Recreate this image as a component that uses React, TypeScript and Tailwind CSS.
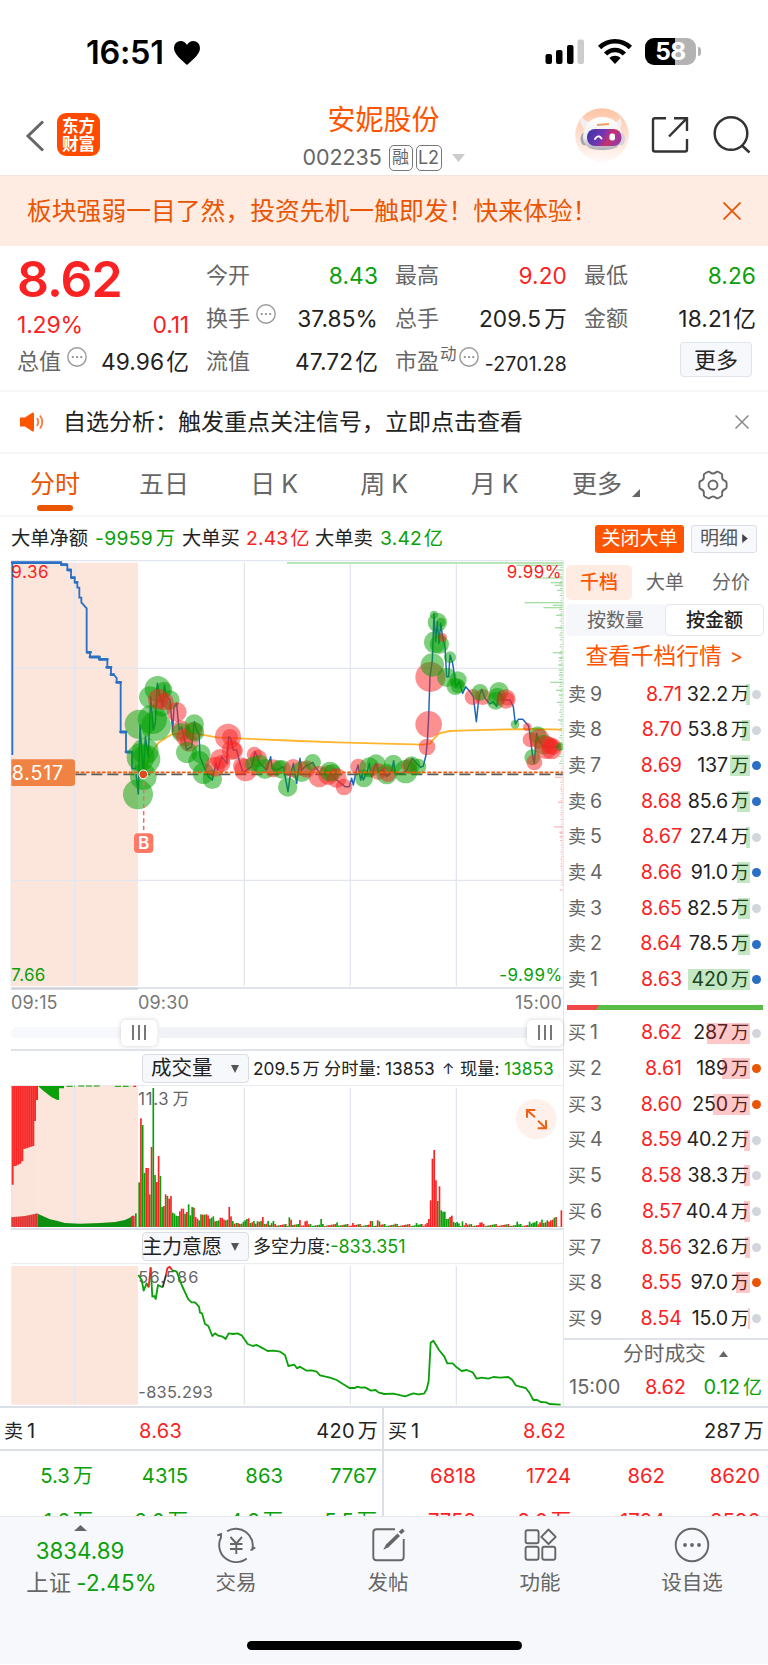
import React from "react";

const RED = "#fa2222";
const GREEN = "#0aa00a";

type Circle = [number, number, number, "g" | "r"];

const preOpen =
  "37,615 37,38 183,38 183,44 202,44 202,60 213,60 213,83 224,83 224,97 232,97 232,113 238,113 238,143 244,143 244,157 260,175 260,307 270,307 270,321 298,321 298,328 322,328 322,352 333,352 333,374 341,374 350,384 350,397 362,397 362,546 378,546 378,606 396,606 396,656 408,656";

const priceLine =
  "408,672 415,732 420,525 425,600 430,680 436,560 445,620 452,440 460,540 466,520 472,400 480,440 487,470 493,405 500,440 510,450 518,545 522,470 530,460 537,540 545,530 560,600 575,590 583,515 590,540 597,550 600,620 612,650 625,680 637,690 648,640 653,660 665,620 680,640 686,560 692,565 700,600 710,600 720,640 730,670 740,660 755,650 765,605 780,640 800,660 812,620 816,655 830,660 850,650 864,725 870,680 880,640 890,700 900,625 905,660 915,650 938,637 945,650 960,670 985,665 1010,690 1035,710 1048,710 1055,685 1060,705 1068,665 1074,645 1082,690 1086,672 1090,690 1100,670 1108,640 1114,680 1128,640 1135,665 1150,660 1160,680 1175,665 1181,632 1186,670 1210,670 1220,660 1237,625 1250,640 1262,652 1270,648 1278,615 1282,575 1286,500 1290,380 1297,330 1302,190 1307,275 1312,215 1317,280 1322,220 1328,262 1335,290 1340,380 1346,380 1350,315 1358,340 1368,410 1378,395 1388,430 1397,410 1410,425 1420,440 1429,515 1437,440 1445,418 1455,445 1470,462 1480,455 1490,470 1498,425 1510,450 1530,450 1540,470 1546,522 1555,508 1568,508 1575,515 1586,528 1592,570 1598,620 1603,640 1610,550 1617,570 1630,590 1650,590 1678,590";

const averageLine =
  "432,672 448,620 475,578 515,553 560,548 605,554 650,562 733,566 900,573 1010,577 1152,581 1270,584 1290,581 1302,566 1318,550 1350,543 1400,541 1520,538 1600,537 1685,539";

const circles: Circle[] = [
  [414, 733, 45, "g"], [418, 523, 44, "g"], [457, 508, 44, "g"], [468, 528, 45, "g"], [422, 622, 42, "g"],
  [436, 603, 40, "g"], [438, 628, 43, "g"], [430, 680, 40, "g"], [450, 442, 33, "g"], [473, 417, 39, "g"],
  [492, 420, 25, "g"], [510, 450, 29, "g"], [486, 472, 28, "g"], [475, 447, 31, "r"], [495, 455, 26, "r"],
  [530, 486, 30, "r"], [543, 540, 29, "r"], [543, 547, 28, "g"], [555, 562, 27, "r"], [567, 577, 28, "r"],
  [580, 543, 28, "r"], [583, 522, 29, "g"], [584, 546, 29, "g"], [560, 607, 32, "g"], [603, 612, 29, "g"],
  [597, 635, 32, "g"], [610, 670, 32, "g"], [637, 688, 29, "g"], [645, 650, 30, "r"], [660, 627, 30, "r"],
  [684, 560, 39, "r"], [690, 561, 24, "r"], [695, 600, 30, "r"], [703, 602, 26, "r"], [665, 640, 26, "r"],
  [725, 648, 26, "r"], [737, 660, 34, "r"], [763, 613, 23, "r"], [775, 625, 26, "r"], [757, 642, 22, "g"],
  [780, 642, 28, "g"], [795, 657, 30, "g"], [820, 655, 27, "r"], [845, 658, 28, "g"], [838, 652, 22, "g"],
  [863, 711, 29, "g"], [880, 655, 28, "r"], [905, 665, 31, "g"], [920, 657, 26, "r"], [938, 637, 25, "g"],
  [958, 680, 32, "r"], [985, 675, 30, "r"], [990, 665, 30, "g"], [998, 668, 26, "g"], [1010, 684, 30, "r"],
  [1032, 711, 25, "r"], [1075, 650, 24, "r"], [1092, 685, 27, "g"], [1108, 652, 30, "g"], [1128, 642, 29, "g"],
  [1135, 665, 25, "r"], [1160, 672, 31, "g"], [1163, 672, 24, "r"], [1180, 642, 28, "g"], [1217, 665, 35, "g"],
  [1228, 648, 23, "r"], [1235, 645, 26, "g"], [1255, 650, 24, "g"], [1281, 591, 25, "r"], [1286, 523, 40, "r"],
  [1291, 381, 45, "r"], [1297, 345, 35, "g"], [1305, 277, 33, "g"], [1318, 283, 29, "g"], [1312, 217, 29, "g"],
  [1302, 194, 12, "g"], [1323, 217, 14, "g"], [1328, 262, 13, "r"], [1340, 382, 29, "g"], [1350, 322, 18, "g"],
  [1366, 409, 26, "g"], [1374, 390, 26, "g"], [1374, 408, 22, "g"], [1418, 441, 24, "r"], [1448, 441, 24, "r"],
  [1440, 427, 25, "g"], [1487, 452, 27, "g"], [1497, 425, 29, "g"], [1492, 440, 27, "g"], [1518, 447, 29, "r"],
  [1523, 447, 20, "r"], [1545, 523, 13, "g"], [1582, 531, 13, "r"], [1591, 569, 23, "r"], [1597, 622, 24, "g"],
  [1603, 637, 24, "r"], [1613, 555, 26, "g"], [1618, 566, 30, "r"], [1632, 584, 30, "g"], [1638, 592, 35, "r"],
  [1655, 598, 30, "r"], [1650, 587, 25, "r"], [1659, 590, 25, "r"], [1680, 590, 12, "g"],
];

const levelTicks: [number, number, string][] = [
  [46, 138, "g"], [60, 20, "g"], [84, 84, "g"], [98, 36, "g"], [106, 24, "g"], [121, 17, "g"], [158, 114, "g"],
  [166, 30, "g"], [173, 58, "g"], [196, 20, "g"], [233, 23, "g"], [308, 30, "g"], [323, 12, "g"], [345, 14, "g"],
  [360, 12, "g"], [375, 12, "g"], [397, 37, "g"], [421, 20, "g"], [435, 12, "g"], [457, 17, "g"], [510, 14, "g"],
  [583, 48, "g"], [682, 23, "r"], [757, 14, "r"], [831, 26, "r"], [847, 10, "r"], [860, 9, "r"], [1020, 9, "r"],
];

const fillerTicks = Array.from({ length: 138 }, (_, i) => {
  const y = 44 + i * 7;
  const len = 3 + ((i * 37) % 11) * (y > 960 ? 0.2 : y > 640 ? 0.45 : 0.8);
  return { y, len, color: y > 640 ? "#fdb5b5" : "#9fdc9f" };
});

const openVolume: [number, string][] = [
  [134, "g"], [326, "r"], [306, "g"], [162, "g"], [177, "r"], [177, "r"], [98, "g"], [240, "r"], [417, "g"],
  [156, "g"], [135, "r"], [213, "r"], [153, "g"], [60, "g"], [63, "r"], [98, "r"], [93, "g"], [85, "r"],
  [93, "r"], [43, "g"], [40, "g"], [34, "g"], [33, "g"], [47, "r"], [55, "r"], [55, "r"], [40, "g"], [45, "r"],
  [68, "g"], [35, "g"], [60, "g"], [58, "r"], [30, "r"], [25, "r"], [20, "g"], [38, "g"], [37, "r"], [37, "g"],
  [38, "r"], [35, "r"], [25, "g"], [28, "g"], [32, "g"], [17, "r"], [18, "g"], [20, "g"], [28, "r"], [27, "r"],
  [22, "r"], [20, "g"], [22, "g"], [60, "r"], [32, "r"], [18, "g"], [10, "r"], [12, "g"], [12, "r"], [9, "g"],
  [10, "r"], [16, "g"], [20, "g"], [24, "g"], [26, "r"], [12, "g"], [14, "r"], [18, "g"], [10, "r"], [17, "g"],
  [16, "r"], [18, "g"], [30, "r"], [9, "g"], [10, "r"], [18, "g"], [6, "r"], [12, "g"], [18, "g"], [9, "r"],
];

const volumeAt: Record<number, [number, string]> = {
  85: [29, "g"], 86: [22, "r"], 91: [21, "r"], 94: [17, "r"], 95: [19, "r"], 103: [24, "g"], 112: [14, "g"],
  121: [12, "r"], 131: [18, "r"], 132: [18, "g"], 135: [20, "r"], 136: [17, "g"], 145: [10, "r"], 157: [12, "g"],
  162: [8, "r"], 163: [12, "r"], 164: [24, "r"], 165: [80, "r"], 166: [205, "r"], 167: [231, "r"],
  168: [140, "r"], 169: [78, "g"], 170: [122, "r"], 171: [50, "g"], 172: [46, "g"], 173: [46, "g"],
  174: [24, "g"], 175: [25, "g"], 176: [30, "r"], 177: [34, "r"], 178: [15, "g"], 179: [12, "g"], 180: [15, "g"],
  181: [11, "g"], 183: [17, "g"], 185: [12, "r"], 193: [13, "r"], 194: [14, "r"], 214: [16, "g"], 221: [16, "g"],
  222: [10, "g"], 223: [13, "g"], 224: [14, "g"], 225: [18, "g"], 226: [8, "r"], 227: [14, "r"], 228: [22, "g"],
  229: [12, "g"], 230: [14, "r"], 231: [20, "g"], 232: [16, "r"], 233: [20, "r"], 234: [22, "r"], 235: [28, "g"],
  236: [30, "r"], 237: [1, "g"], 238: [1, "g"], 239: [50, "r"],
};

const volume = Array.from({ length: 240 }, (_, i): [number, string] => {
  if (i < openVolume.length) return openVolume[i];
  return volumeAt[i] ?? [3 + ((i * 29) % 7), Math.floor(i / 3 + (i % 7)) % 2 ? "r" : "g"];
});

const indicatorGreen = [
  "415,675 425,690 431,722 440,700 446,712",
  "452,652 457,740 463,738 467,747 474,705 488,712",
  "516,660 530,665 545,705 565,748 575,757 585,757 597,770 600,788 606,790 615,822 625,828 637,858 645,850 655,857 668,860 677,867 686,850 700,852 712,850 725,856 743,882 758,888 770,885 785,893 803,903 820,902 840,905 855,915 865,948 883,944 891,955 900,950 920,962 935,961 950,965 960,976 990,983 1010,990 1030,1003 1048,1014 1065,1014 1072,1010 1082,1013 1095,1012 1113,1022 1127,1020 1135,1027 1153,1032 1180,1031 1215,1039 1240,1030 1255,1033 1272,1031 1280,1018 1286,993 1292,878 1300,872 1308,885 1317,900 1333,920 1342,940 1358,940 1370,952 1385,963 1400,960 1418,967 1430,986 1445,983 1465,986 1480,981 1500,983 1525,981 1537,990 1547,1006 1560,1010 1577,1014 1588,1028 1600,1050 1612,1050 1622,1056 1638,1057 1648,1062 1682,1064",
];

const sells: [string, string, string, number, boolean][] = [
  ["9", "8.71", "32.2", 4.5, false], ["8", "8.70", "53.8", 8, false], ["7", "8.69", "137", 20, true],
  ["6", "8.68", "85.6", 13, true], ["5", "8.67", "27.4", 4, false], ["4", "8.66", "91.0", 13.5, true],
  ["3", "8.65", "82.5", 12.5, false], ["2", "8.64", "78.5", 12, true], ["1", "8.63", "420", 62, true],
];
const buys: [string, string, string, number, boolean][] = [
  ["1", "8.62", "287", 43, false], ["2", "8.61", "189", 28, true], ["3", "8.60", "250", 37, true],
  ["4", "8.59", "40.2", 6, false], ["5", "8.58", "38.3", 6, false], ["6", "8.57", "40.4", 6, false],
  ["7", "8.56", "32.6", 5, false], ["8", "8.55", "97.0", 14.5, true], ["9", "8.54", "15.0", 2, false],
];

/** Number followed by an optional 万/亿 unit, set a little apart from the digits. */
function Num({ children }: { children: string }) {
  const unit = /[万亿]$/.test(children) ? children.slice(-1) : "";
  return (
    <>
      {unit ? children.slice(0, -1) : children}
      {unit && <span className={unit === "亿" ? "ml-[0.09em]" : "ml-[0.14em]"}>{unit}</span>}
    </>
  );
}

function StatusBar() {
  return (
    <div className="flex h-[100px] items-start pt-[37px]">
      <div className="ml-[86px] flex h-8 w-[459px] items-center">
        <span className="w-[85px] pt-[1px] text-[32.5px] font-semibold leading-none tracking-[-0.3px] text-black">16:51</span>
        <svg className="ml-[2px] h-[26px] w-[28px]" viewBox="0 0 28 26">
          <path d="M14 25C9 20 1 14.5 1 8.2C1 4 4 1 7.6 1C10.600 1 13 2.800 14 5C15 2.800 17.400 1 20.400 1C24 1 27 4 27 8.200C27 14.500 19 20 14 25Z" fill="#000" />
        </svg>
      </div>
      <svg className="h-[28px] w-[40px]" viewBox="0 0 40 28">
        <rect x="0.500" y="17" width="6.500" height="10" rx="2" fill="#000" />
        <rect x="11" y="13" width="6.500" height="14" rx="2" fill="#000" />
        <rect x="22" y="8" width="6.500" height="19" rx="2" fill="#000" />
        <rect x="32.500" y="2.500" width="6.500" height="24.500" rx="2" fill="#ccc" />
      </svg>
      <svg className="ml-[12px] h-[28px] w-[36px]" viewBox="0 0 36 28">
        <g fill="none" stroke="#000" strokeWidth="4.600">
          <path d="M2.600 10.500C11 2.200 25 2.200 33.400 10.500" />
          <path d="M8.600 17C13.800 11.600 22.200 11.600 27.400 17" />
        </g>
        <path d="M12.400 21C15.500 18 20.500 18 23.600 21L18 27Z" fill="#000" />
      </svg>
      <div className="ml-[12px] mt-[1px] flex items-center">
        <div className="flex h-[27px] w-[51px] items-center justify-center rounded-[9px] bg-[linear-gradient(90deg,#000_58%,#b3b3b3_58%)] text-[24.5px] font-bold leading-none tracking-[-0.5px] text-white">
          58
        </div>
        <div className="ml-[1.5px] h-[9px] w-[3px] rounded-r-full bg-[#b3b3b3]" />
      </div>
    </div>
  );
}

function Robot() {
  return (
    <svg className="h-[56px] w-[54px]" viewBox="0 0 54 56">
      <defs>
        <linearGradient id="halo" x1="0" y1="0" x2="0" y2="1">
          <stop offset="0" stopColor="#ffc3a6" />
          <stop offset="1" stopColor="#fffaf8" />
        </linearGradient>
        <linearGradient id="visor" x1="0" y1="0" x2="1" y2="0.3">
          <stop offset="0" stopColor="#3a35a0" />
          <stop offset="0.5" stopColor="#7136b4" />
          <stop offset="0.75" stopColor="#c92f6c" />
          <stop offset="1" stopColor="#9a3a9c" />
        </linearGradient>
        <linearGradient id="shell" x1="0" y1="0" x2="0" y2="1">
          <stop offset="0" stopColor="#ffffff" />
          <stop offset="0.6" stopColor="#efeef0" />
          <stop offset="1" stopColor="#b0adb5" />
        </linearGradient>
      </defs>
      <circle cx="27" cy="28" r="26.800" fill="url(#halo)" />
      <path d="M7 9.500Q3 16 9 21L17 15Q9 15 7 9.500ZM45 10Q49 17 44 22L36 15Q44 16 45 10Z" fill="#f3eff0" />
      <ellipse cx="9.500" cy="32" rx="4" ry="6.500" fill="#a7a5b0" />
      <ellipse cx="46" cy="32" rx="4" ry="6.500" fill="#d5d3da" />
      <path d="M27 10C37 10 44 16 46 24C47.500 31 46 37 42 40C38 44 16 44 13 40C8 36 7 31 9 24C11 15 18 10 27 10Z" fill="url(#shell)" />
      <rect x="12" y="22" width="34.500" height="17" rx="8" fill="url(#visor)" />
      <path d="M20 32Q23.500 27 26.500 31.500" fill="none" stroke="#fff" strokeWidth="2" strokeLinecap="round" />
      <rect x="34.500" y="26.500" width="5.500" height="7" rx="2.200" fill="#fff" />
      <path d="M22 18L34 17" stroke="#f0a064" strokeWidth="2.200" />
    </svg>
  );
}

function NavBar() {
  return (
    <div className="flex h-[75px] items-start">
      <svg className="ml-[25px] mt-[20px] h-[32px] w-[20px]" viewBox="0 0 20 32">
        <path d="M18 1.500L3 16L18 30.500" fill="none" stroke="#666" strokeWidth="3" />
      </svg>
      <div className="ml-[12px] mt-[13px] flex h-[43px] w-[43px] flex-col items-center justify-center rounded-[9px] bg-[#ff4a00] text-[16.5px] font-bold leading-[18px] text-white">
        <span>东方</span>
        <span>财富</span>
      </div>
      <div className="ml-[180px] flex w-[207px] flex-col items-center">
        <div className="flex h-[40px] items-center text-[28px] leading-none text-[#ff5500]">安妮股份</div>
        <div className="flex h-[35px] items-center text-[#666]">
          <span className="w-[86px] text-[21.5px] leading-none tracking-[-0.1px]">002235</span>
          <span className="flex h-[26px] w-[24px] items-center justify-center rounded-[5px] border-[1.5px] border-[#777] text-[17px] leading-none">融</span>
          <span className="ml-[3px] flex h-[26px] w-[26px] items-center justify-center rounded-[5px] border-[1.5px] border-[#777] text-[18px] leading-none">L2</span>
          <svg className="ml-[10px] h-[8px] w-[13px]" viewBox="0 0 13 8"><path d="M0 0H13L6.500 8Z" fill="#ccc" /></svg>
        </div>
      </div>
      <div className="ml-[88px] mt-[7px] w-[54px]"><Robot /></div>
      <svg className="ml-[22px] mt-[16px] h-[38px] w-[38px]" viewBox="0 0 38 38" fill="none" stroke="#333" strokeWidth="2.400">
        <path d="M15 2.200H4Q2 2.200 2 4.200V33.500Q2 35.500 4 35.500H34Q36 35.500 36 33.500V23" />
        <path d="M23 2.200H36V15M35.500 2.700L18 20.500" />
      </svg>
      <svg className="ml-[24px] mt-[15px] h-[40px] w-[38px]" viewBox="0 0 38 40" fill="none" stroke="#333" strokeWidth="2.500">
        <circle cx="18" cy="18.500" r="16.300" />
        <path d="M29 30.500L36.500 37.500" />
      </svg>
    </div>
  );
}

function Info() {
  return (
    <svg className="h-[20px] w-[20px] shrink-0" viewBox="0 0 20 20">
      <circle cx="10" cy="10" r="9.200" fill="none" stroke="#999" strokeWidth="1.400" />
      <circle cx="5.800" cy="10" r="1.100" fill="#888" /><circle cx="10" cy="10" r="1.100" fill="#888" /><circle cx="14.200" cy="10" r="1.100" fill="#888" />
    </svg>
  );
}

function Stat({ label, value, color, info }: { label: string; value: string; color: string; info?: boolean }) {
  return (
    <div className="flex h-[43px] items-center text-[22px] leading-none">
      <span className="text-[#666]">{label}</span>
      {info && <span className="mb-[9px] ml-[6px]"><Info /></span>}
      <span className="ml-auto pt-[2px] text-[22.7px] tracking-[0.1px]" style={{ color }}><Num>{value}</Num></span>
    </div>
  );
}

function Summary() {
  return (
    <div className="grid h-[144px] grid-cols-[172px_172px_172px_172px] gap-x-[17px] pl-[17px] pt-[7.5px]">
      <div className="flex flex-col">
        <div className="flex h-[50px] items-center text-[50px] font-semibold leading-none tracking-[-1px] text-[#fa2222]">8.62</div>
        <div className="flex h-[36px] items-center justify-between pt-[7px] text-[23px] leading-none tracking-[-0.2px] text-[#fa2222]">
          <span>1.29%</span><span>0.11</span>
        </div>
        <Stat label="总值" value="49.96亿" color="#222" info />
      </div>
      <div>
        <Stat label="今开" value="8.43" color={GREEN} />
        <Stat label="换手" value="37.85%" color="#222" info />
        <Stat label="流值" value="47.72亿" color="#222" />
      </div>
      <div>
        <Stat label="最高" value="9.20" color={RED} />
        <Stat label="总手" value="209.5万" color="#222" />
        <div className="flex h-[43px] items-center leading-none">
          <span className="text-[22px] text-[#666]">市盈</span>
          <span className="mb-[14px] ml-[1px] text-[16.5px] text-[#666]">动</span>
          <span className="mb-[9px] ml-[2px]"><Info /></span>
          <span className="ml-auto mt-[7px] text-[19.5px] tracking-[0.2px] text-[#222]">-2701.28</span>
        </div>
      </div>
      <div>
        <Stat label="最低" value="8.26" color={GREEN} />
        <Stat label="金额" value="18.21亿" color="#222" />
        <div className="ml-[96px] mt-[2.5px] flex h-[35px] w-[72px] items-center justify-center rounded-[4px] border border-[#dfe3ea] bg-[#f6f8fb] text-[22px] leading-none text-[#222]">更多</div>
      </div>
    </div>
  );
}

function Tabs() {
  return (
    <div className="grid h-[61px] grid-cols-[54px_27px_110px_110px_110px_111px_120px_1fr] items-center pl-[28px] text-[25px] leading-none text-[#666]">
      <div className="flex h-full flex-col items-center pt-[18px] text-[#ea5504]">
        <span>分时</span>
        <span className="mt-[8px] h-[6px] w-[36px] rounded-[3px] bg-[#ea5504]" />
      </div>
      <span />
      <span className="text-center">五日</span>
      <span className="text-center tracking-[-0.5px]">日 K</span>
      <span className="text-center tracking-[-0.5px]">周 K</span>
      <span className="text-center tracking-[-0.5px]">月 K</span>
      <span className="flex items-end pl-[22px]">更多<svg className="ml-[10px] h-[8px] w-[8px] shrink-0" viewBox="0 0 8 8"><path d="M8 0V8H0Z" fill="#666" /></svg></span>
      <svg className="ml-[28px] h-[30px] w-[30px]" viewBox="0 0 30 30" fill="none" stroke="#666" strokeWidth="1.900" strokeLinejoin="round">
        <path d="M10 1.800Q11 1.300 12 2.200Q15 5 18 2.200Q19 1.300 20 1.800L23.500 3.800Q24.500 4.500 24.200 5.800Q23.500 9.700 27.300 11Q28.600 11.500 28.600 13V17Q28.600 18.500 27.300 19Q23.500 20.300 24.200 24.200Q24.500 25.500 23.500 26.200L20 28.200Q19 28.700 18 27.800Q15 25 12 27.800Q11 28.700 10 28.200L6.500 26.200Q5.500 25.500 5.800 24.200Q6.500 20.300 2.700 19Q1.400 18.500 1.400 17V13Q1.400 11.500 2.700 11Q6.500 9.700 5.800 5.800Q5.500 4.500 6.500 3.800Z" />
        <circle cx="15" cy="15" r="4.500" />
      </svg>
    </div>
  );
}

function BigOrders() {
  return (
    <div className="flex h-[43px] items-center pl-[11px] text-[19.3px] leading-none text-[#222]">
      <span className="w-[84px]">大单净额</span>
      <span className="w-[87px] tracking-[0.3px] text-[#0aa00a]"><Num>-9959万</Num></span>
      <span className="w-[64px]">大单买</span>
      <span className="w-[69px] tracking-[0.2px] text-[#fa2222]"><Num>2.43亿</Num></span>
      <span className="w-[65px]">大单卖</span>
      <span className="w-[215px] tracking-[0.2px] text-[#0aa00a]"><Num>3.42亿</Num></span>
      <span className="flex h-[28px] w-[89px] items-center justify-center rounded-[3px] bg-[#ff5500] text-[19px] text-white">关闭大单</span>
      <span className="ml-[7px] flex h-[28px] w-[66px] items-center justify-center rounded-[3px] border border-[#dcdfe6] bg-[#f8f9fc] text-[19px] text-[#555]">
        明细
        <svg className="ml-[4px] h-[9px] w-[6px]" viewBox="0 0 5 8"><path d="M0 0L5 4L0 8Z" fill="#444" /></svg>
      </span>
    </div>
  );
}

function PriceChart() {
  return (
    <svg className="block h-[430px] w-[564px] shrink-0" viewBox="0 30 1692 1290" fontFamily="Inter, sans-serif">
      <rect x="34" y="38" width="380" height="1270" fill="#fce5da" />
      <g stroke="#e2e7ef" strokeWidth="4">
        <path d="M224 38V1308M733 38V1308M1051 38V1308M1369 38V1308M34 355H1690M34 991H1690M34 32H1690M34 32V1308" />
      </g>
      <path d="M34 1314H1690" stroke="#d5d9e0" strokeWidth="4" />
      <path d="M34 1316H414" stroke="#cfd1d5" strokeWidth="6" />
      <path d="M861 39H1690" stroke="#b9e6b9" strokeWidth="6" />
      {fillerTicks.map((t) => <rect key={t.y} x={1688 - t.len} y={t.y} width={t.len} height="3" fill={t.color} />)}
      {levelTicks.map(([y, w, c]) => <rect key={y} x={1688 - w} y={y - 2} width={w} height="4" fill={c === "g" ? "#a4dea4" : "#fdbcbc"} />)}
      <polyline points={preOpen} fill="none" stroke="#2a70c4" strokeWidth="5.500" />
      <path d="M37 38H183M185 44H200M204 60H212M215 83H223M226 97H231M262 307H272M270 321H298M298 328H322M362 546H378M378 606H396M320 352H333M333 374H341M350 397H362" stroke="#2a70c4" strokeWidth="8.500" strokeLinecap="round" />
      <polyline points={averageLine} fill="none" stroke="#ffb62e" strokeWidth="5.500" strokeLinejoin="round" />
      <polyline points={priceLine} fill="none" stroke="#1e66bd" strokeWidth="4.500" strokeLinejoin="round" />
      <path d="M34 673H1690" stroke="#5a5a5a" strokeWidth="5" strokeDasharray="33 15" />
      {circles.map(([x, y, r, c], i) => (
        <circle key={i} cx={x} cy={y} r={r} fill={c === "g" ? "#00a000" : "#fa2222"} fillOpacity="0.5" />
      ))}
      <path d="M34 667H1690" stroke="#f35c0c" strokeWidth="5.500" strokeDasharray="11 5" />
      <path d="M34 628H216Q225 628 225 637V699Q225 708 216 708H34Z" fill="#f08344" />
      <text x="35" y="690" fontSize="59" letterSpacing="2.500" fill="#fff">8.517</text>
      <path d="M431 695V850" stroke="#f9685a" strokeWidth="4.500" strokeDasharray="13 9" />
      <circle cx="430" cy="673" r="13" fill="#e0491e" stroke="#fff" strokeWidth="3" />
      <rect x="402" y="850" width="58" height="59" rx="12" fill="#ff7866" />
      <text x="431" y="898" fontSize="52" fontWeight="600" fill="#fff" textAnchor="middle">B</text>
      <text x="34" y="85" fontSize="51" letterSpacing="1.500" fill={RED}>9.36</text>
      <text x="1686" y="85" fontSize="51" letterSpacing="1.500" fill={RED} textAnchor="end">9.99%</text>
      <text x="34" y="1294" fontSize="51" letterSpacing="1" fill={GREEN}>7.66</text>
      <text x="1688" y="1294" fontSize="51" letterSpacing="1.500" fill={GREEN} textAnchor="end">-9.99%</text>
      <path d="M1690 30V1320" stroke="#e2e6ec" strokeWidth="3" />
    </svg>
  );
}

function Handle() {
  return (
    <div className="flex h-[26px] w-[36px] items-center justify-center gap-[4px] rounded-[5px] bg-white shadow-[0_0_5px_rgba(0,0,0,0.18)]">
      <span className="h-[15px] w-[2px] bg-[#777]" /><span className="h-[15px] w-[2px] bg-[#777]" /><span className="h-[15px] w-[2px] bg-[#777]" />
    </div>
  );
}

function Selector({ label, tight }: { label: string; tight?: boolean }) {
  return (
    <div className="ml-[142px] flex h-[29px] w-[107px] items-center justify-between rounded-[4px] border border-[#d9dce3] bg-[#f6f8fb] pr-[9px] text-[20.5px] leading-none text-[#222]">
      <span className={tight ? "-ml-[1px] text-[20px]" : "pl-[8px]"}>{label}</span>
      <svg className="h-[8px] w-[8px]" viewBox="0 0 8 8"><path d="M0 0H8L4 8Z" fill="#555" /></svg>
    </div>
  );
}

function VolumeChart() {
  return (
    <svg className="block h-[143px] w-[564px] shrink-0" viewBox="0 105 1692 429">
      <rect x="34" y="106" width="380" height="425" fill="#fce5da" />
      <path d="M224 106V531M733 113V531M1051 113V531M1369 113V531M35 106V531" stroke="#e2e7ef" strokeWidth="4" />
      <path d="M34 106H1690" stroke="#e6e9f0" strokeWidth="3" />
      <path d="M35 108V404H41V348H50V344H58V341H64V334H70V298L103 287V213H108V150H114V108Z" fill="#f92525" />
      <path d="M114 108L130 122L155 142L172 150H177V115H192V108Z" fill="#0aa00a" />
      <path d="M200 109H225M235 108H300M345 109H392" stroke="#0aa00a" strokeWidth="3" strokeDasharray="18 5" />
      <path d="M400 109H408" stroke="#f92525" strokeWidth="4" />
      <path d="M34 531V502L75 498L113 490V531Z" fill="#e33030" />
      <path d="M113 531V491L130 499L150 508L170 512L195 519L240 521L300 519L345 516L375 510L392 502L400 495V531Z" fill="#0f8f12" />
      <rect x="394" y="498" width="10" height="33" fill="#e33030" /><rect x="405" y="490" width="5" height="41" fill="#0aa00a" />
      <path d="M39.500 108V531M46 108V531M52.500 108V531M59 108V531M65.500 108V531M72 108V531M78.500 108V531M85 108V531M91.500 108V531M98 108V531M104.500 108V531" stroke="#fce5da" strokeOpacity="0.350" strokeWidth="1.500" />
      <text x="415" y="164" fontSize="50" letterSpacing="2" fill="#666" fontFamily="Inter, 'Noto Sans CJK SC', sans-serif">11.3<tspan dx="10">万</tspan></text>
      {volume.map(([h, c], i) => (
        <rect key={i} x={415 + i * 5.3} y={531 - h} width={5} height={h} fill={c === "g" ? "#0aa00a" : "#fa2222"} />
      ))}
      <circle cx="1609" cy="207" r="61" fill="#fef0ea" />
      <path d="M1581 203V180H1606M1583 182L1605 202M1638 211V235H1613M1636 233L1614 212" fill="none" stroke="#ee6218" strokeWidth="6" />
      <path d="M1690 105V540" stroke="#e2e6ec" strokeWidth="3" />
    </svg>
  );
}

function IndicatorChart() {
  return (
    <svg className="block h-[143px] w-[564px] shrink-0" viewBox="0 639 1692 429">
      <rect x="34" y="648" width="380" height="416" fill="#fce5da" />
      <path d="M224 648V1064M733 648V1064M1051 648V1064M1369 648V1064" stroke="#e2e7ef" strokeWidth="4" />
      <path d="M34 641H1690" stroke="#e6e9f0" strokeWidth="3" />
      <g fontSize="49" fill="#666" fontFamily="Inter, sans-serif">
        <text x="415" y="699" letterSpacing="3.500">56.586</text>
        <text x="415" y="1043" letterSpacing="1">-835.293</text>
      </g>
      <g fill="none" strokeWidth="5.500" strokeLinejoin="round">
        {indicatorGreen.map((p) => <polyline key={p} points={p} stroke="#0aa00a" />)}
        <polyline points="446,712 452,652" stroke="#fa2222" />
        <polyline points="488,712 498,675" stroke="#333" />
        <polyline points="498,675 502,655 509,650 516,660" stroke="#fa2222" />
      </g>
      <path d="M1690 639V1068" stroke="#e2e6ec" strokeWidth="3" />
    </svg>
  );
}

function QuoteRow({ side, row }: { side: "卖" | "买"; row: [string, string, string, number, boolean] }) {
  const [level, price, amount, width, active] = row;
  const sell = side === "卖";
  return (
    <div className="flex h-[35.68px] items-center pl-[4px] text-[19.6px] leading-none">
      <span className="w-[46px] text-[#666]"><span className="mr-[4px] text-[18px]">{side}</span>{level}</span>
      <span className="w-[68px] text-right text-[#fa2222]">{price}</span>
      <span className="relative flex h-[21px] w-[68px] items-center justify-end pr-[1px] tracking-[-0.1px] text-[#222]">
        {amount}<span className="ml-[3px] text-[18px]">万</span>
        <span className={sell ? "absolute right-0 top-0 h-full bg-[#0aa00a]/25" : "absolute right-0 top-0 h-full bg-[#fa2222]/25"} style={{ width }} />
      </span>
      <span className={active ? (sell ? "ml-[2px] h-[9px] w-[9px] rounded-full bg-[#2a6fc4]" : "ml-[2px] h-[9px] w-[9px] rounded-full bg-[#ea5504]") : "ml-[2px] h-[9px] w-[9px] rounded-full bg-[#d2d6dc]"} />
    </div>
  );
}

function OrderBook() {
  return (
    <div className="flex w-[204px] flex-col">
      <div className="ml-[2px] mt-[5px] flex h-[35px] items-center text-[19px] leading-none text-[#666]">
        <span className="flex h-full w-[66px] items-center justify-center rounded-[5px] bg-[#feece3] font-medium text-[#ff5500]">千档</span>
        <span className="w-[66px] text-center">大单</span>
        <span className="w-[66px] text-center">分价</span>
      </div>
      <div className="ml-[2px] mt-[4px] flex h-[32px] w-[198px] rounded-[5px] bg-[#f6f7fa] text-[19px] leading-none">
        <span className="flex w-[99px] items-center justify-center text-[#666]">按数量</span>
        <span className="flex w-[99px] items-center justify-center rounded-[5px] border border-[#e4e6ec] bg-white font-medium text-[#222]">按金额</span>
      </div>
      <div className="ml-[21.5px] flex h-[40.500px] items-center text-[22.7px] leading-none text-[#ff5500]">查看千档行情<span className="ml-[8px] text-[20px]">&gt;</span></div>
      <div>{sells.map((r) => <QuoteRow key={r[0]} side="卖" row={r} />)}</div>
      <div className="ml-[3px] mt-[7.5px] h-[4.5px] w-[196px] bg-[linear-gradient(120deg,#f04848_16%,#5abb46_16%)]" />
      <div className="mt-[5.9px]">{buys.map((r) => <QuoteRow key={r[0]} side="买" row={r} />)}</div>
      <div className="mt-[1.5px] h-[2px] bg-[#dfe2ea]" />
      <div className="flex h-[29px] items-center pl-[59px] text-[20.7px] leading-none text-[#666]">
        分时成交
        <svg className="ml-[13px] h-[6px] w-[9px]" viewBox="0 0 9 6"><path d="M0 6H9L4.500 0Z" fill="#666" /></svg>
      </div>
      <div className="flex h-[36px] items-center pl-[5px] text-[20px] leading-none">
        <span className="w-[76px] text-[#666]">15:00</span>
        <span className="w-[40px] tracking-[-0.3px] text-[#fa2222]">8.62</span>
        <span className="w-[77px] text-right text-[#0aa00a]">0.12<span className="ml-[3px] text-[19px]">亿</span></span>
      </div>
    </div>
  );
}

function DepthSide({ side, price, amount, red, cells, next }: { side: string; price: string; amount: string; red?: boolean; cells: string[]; next: string[] }) {
  return (
    <div className={red ? "border-l-2 border-[#dcdfe5]" : ""}>
      <div className="grid h-[43px] grid-cols-[134px_1fr_1fr] items-center border-b-2 border-[#dcdfe5] pl-[4px] pr-[4px] pt-[5px] text-[20px] leading-none text-[#222]">
        <span className="text-[19px]">{side}<span className="ml-[4px] text-[20px]">1</span></span><span className="pl-[1px] tracking-[0.3px] text-[#fa2222]">{price}</span><span className="text-right tracking-[0.3px]"><Num>{amount}</Num></span>
      </div>
      {[cells, next].map((line, i) => (
        <div key={i} className={red ? "grid h-[44.5px] grid-cols-[92px_95px_94px_95px] items-center pt-[6px] text-right text-[20.3px] leading-none text-[#fa2222]" : "grid h-[44.5px] grid-cols-[93px_95px_95px_94px] items-center pt-[6px] text-right text-[20.3px] leading-none text-[#0aa00a]"}>
          {line.map((c, j) => <span key={j}><Num>{c}</Num></span>)}
        </div>
      ))}
    </div>
  );
}

function BottomItem({ label, children }: { label: string; children: React.ReactNode }) {
  return (
    <div className="flex flex-col items-center pt-[9px] text-[20.5px] leading-none text-[#666]">
      <svg className="h-[38px] w-[40px]" viewBox="0 0 40 38" fill="none" stroke="#666" strokeWidth="1.900">{children}</svg>
      <span className="mt-[9px] h-[21px]">{label}</span>
    </div>
  );
}

export default function App() {
  return (
    <div className="flex h-[1665px] w-[768px] flex-col overflow-hidden bg-white font-[Inter,'Noto_Sans_CJK_SC',sans-serif] font-normal whitespace-nowrap">
      <StatusBar />
      <NavBar />
      <div className="flex h-[71px] items-center justify-between border-t border-[#f0e6e0] bg-[#feece3] pl-[27px] pr-[27px] text-[24.8px] leading-none text-[#ea5504]">
        <span>板块强弱一目了然，投资先机一触即发！快来体验！</span>
        <svg className="h-[18px] w-[18px]" viewBox="0 0 18 18"><path d="M0.500 0.500L17.500 17.500M17.500 0.500L0.500 17.500" stroke="#ea5504" strokeWidth="1.800" /></svg>
      </div>
      <Summary />
      <div className="flex h-[64px] items-center border-y-2 border-[#f5f6f8] pl-[20px] pr-[19px] text-[23px] leading-none text-[#222]">
        <svg className="h-[20px] w-[24px]" viewBox="0 0 24 20">
          <path d="M0 5.500H5L12.500 0.500Q14 0 14 2V18Q14 20 12.500 19.500L5 14.500H0Z" fill="#ff5500" />
          <path d="M17 6Q19.500 10 17 14M20 3.500Q24.500 10 20 16.500" fill="none" stroke="#ff7a3c" strokeWidth="1.800" />
        </svg>
        <span className="ml-[19px] flex-1">自选分析：触发重点关注信号，立即点击查看</span>
        <svg className="h-[14px] w-[14px]" viewBox="0 0 14 14"><path d="M0.500 0.500L13.500 13.500M13.500 0.500L0.500 13.500" stroke="#888" strokeWidth="1.500" /></svg>
      </div>
      <Tabs />
      <div className="h-[2px] bg-[#f5f6f8]" />
      <BigOrders />
      <div className="flex h-[846px]">
        <div className="flex w-[564px] flex-col">
          <PriceChart />
          <div className="flex h-[27px] items-center border-r border-[#e2e6ec] pb-[1px] pl-[11px] pr-[1px] text-[18px] leading-none tracking-[0.15px] text-[#777]">
            <span className="w-[127px]">09:15</span><span className="flex-1">09:30</span><span>15:00</span>
          </div>
          <div className="flex h-[32px] items-center border-r border-[#e2e6ec] pb-[1px] pl-[11px]">
            <div className="h-[11px] w-[110px] rounded-l-full bg-[#f7f8fb]" />
            <Handle />
            <div className="h-[11px] flex-1 bg-[#f1f2f5]" />
            <Handle />
          </div>
          <div className="ml-[11px] h-[2px] bg-[#dfe2ea]" />
          <div className="flex h-[34px] items-center border-r border-[#e2e6ec] pt-[1px] text-[17.3px] leading-none text-[#222]">
            <Selector label="成交量" />
            <span className="ml-[4px] w-[71px]"><Num>209.5万</Num></span>
            <span className="w-[61px]">分时量:</span>
            <span className="w-[57px]">13853</span>
            <span className="w-[18px] text-[15px]">↑</span>
            <span className="w-[44px]">现量:</span>
            <span className="text-[#0aa00a]">13853</span>
          </div>
          <VolumeChart />
          <div className="ml-[11px] h-[2px] bg-[#dfe2ea]" />
          <div className="flex h-[33px] items-center border-r border-[#e2e6ec] text-[18px] leading-none text-[#222]">
            <Selector label="主力意愿" tight />
            <span className="ml-[4px]">多空力度:</span>
            <span className="text-[#0aa00a]">-833.351</span>
          </div>
          <IndicatorChart />
        </div>
        <OrderBook />
      </div>
      <div className="grid h-[110px] shrink-0 grid-cols-[382px_386px] overflow-hidden border-t-2 border-[#dcdfe5]">
        <DepthSide side="卖" price="8.63" amount="420万" cells={["5.3万", "4315", "863", "7767"]} next={["1.6万", "2.0万", "4.2万", "5.5万"]} />
        <DepthSide red side="买" price="8.62" amount="287万" cells={["6818", "1724", "862", "8620"]} next={["7758", "2.0万", "1724", "8586"]} />
      </div>
      <div className="flex h-[148px] shrink-0 flex-col items-center border-t border-[#e6e8ec] bg-[#f7f8fb]">
        <div className="grid h-[124px] w-full grid-cols-[160px_152px_152px_152px_152px]">
          <div className="flex flex-col items-center pt-[8px] text-[22.3px] leading-none text-[#0aa00a]">
            <svg className="h-[6px] w-[13px]" viewBox="0 0 13 6"><path d="M0 6H13L6.500 0Z" fill="#666" /></svg>
            <span className="mt-[9px] h-[24px]">3834.89</span>
            <span className="ml-[23px] mt-[8px] tracking-[0.2px]"><span className="mr-[5px] text-[#666]">上证</span>-2.45%</span>
          </div>
          <BottomItem label="交易">
            <path d="M11 5.200A17 17 0 0 1 36.200 24.500M34.500 24.300L39.300 21.500M30.700 32.500A17 17 0 0 1 5 11.500V8M1.300 9.300L6 7.600M14.500 11L20.300 17.500L26 11M20.300 17.500V28M14 18H26.500M14 23H26.500" />
          </BottomItem>
          <BottomItem label="发帖">
            <path d="M27 3.300H8.500Q5.300 3.300 5.300 6.500V31Q5.300 34.200 8.500 34.200H32.500Q35.700 34.200 35.700 31V13" />
            <path d="M15.300 23.700L18 18.500L29.500 7.500L32 10L20.500 21.300Z" fill="#666" stroke="none" /><path d="M32 7L35.500 3.800" strokeWidth="3.600" />
          </BottomItem>
          <BottomItem label="功能">
            <rect x="5.600" y="4.300" width="13" height="13" rx="2" /><rect x="5.600" y="20.700" width="13" height="13" rx="2" /><rect x="22.300" y="20.700" width="13" height="13" rx="2" />
            <path d="M28.500 3.500L35.700 10.800L28.500 18L21.300 10.800Z" strokeLinejoin="round" />
          </BottomItem>
          <BottomItem label="设自选">
            <circle cx="20" cy="19" r="16.300" />
            <g fill="#666" stroke="none"><circle cx="13" cy="19" r="1.900" /><circle cx="20" cy="19" r="1.900" /><circle cx="27" cy="19" r="1.900" /></g>
          </BottomItem>
        </div>
        <div className="h-[9px] w-[275px] rounded-full bg-black" />
      </div>
    </div>
  );
}
